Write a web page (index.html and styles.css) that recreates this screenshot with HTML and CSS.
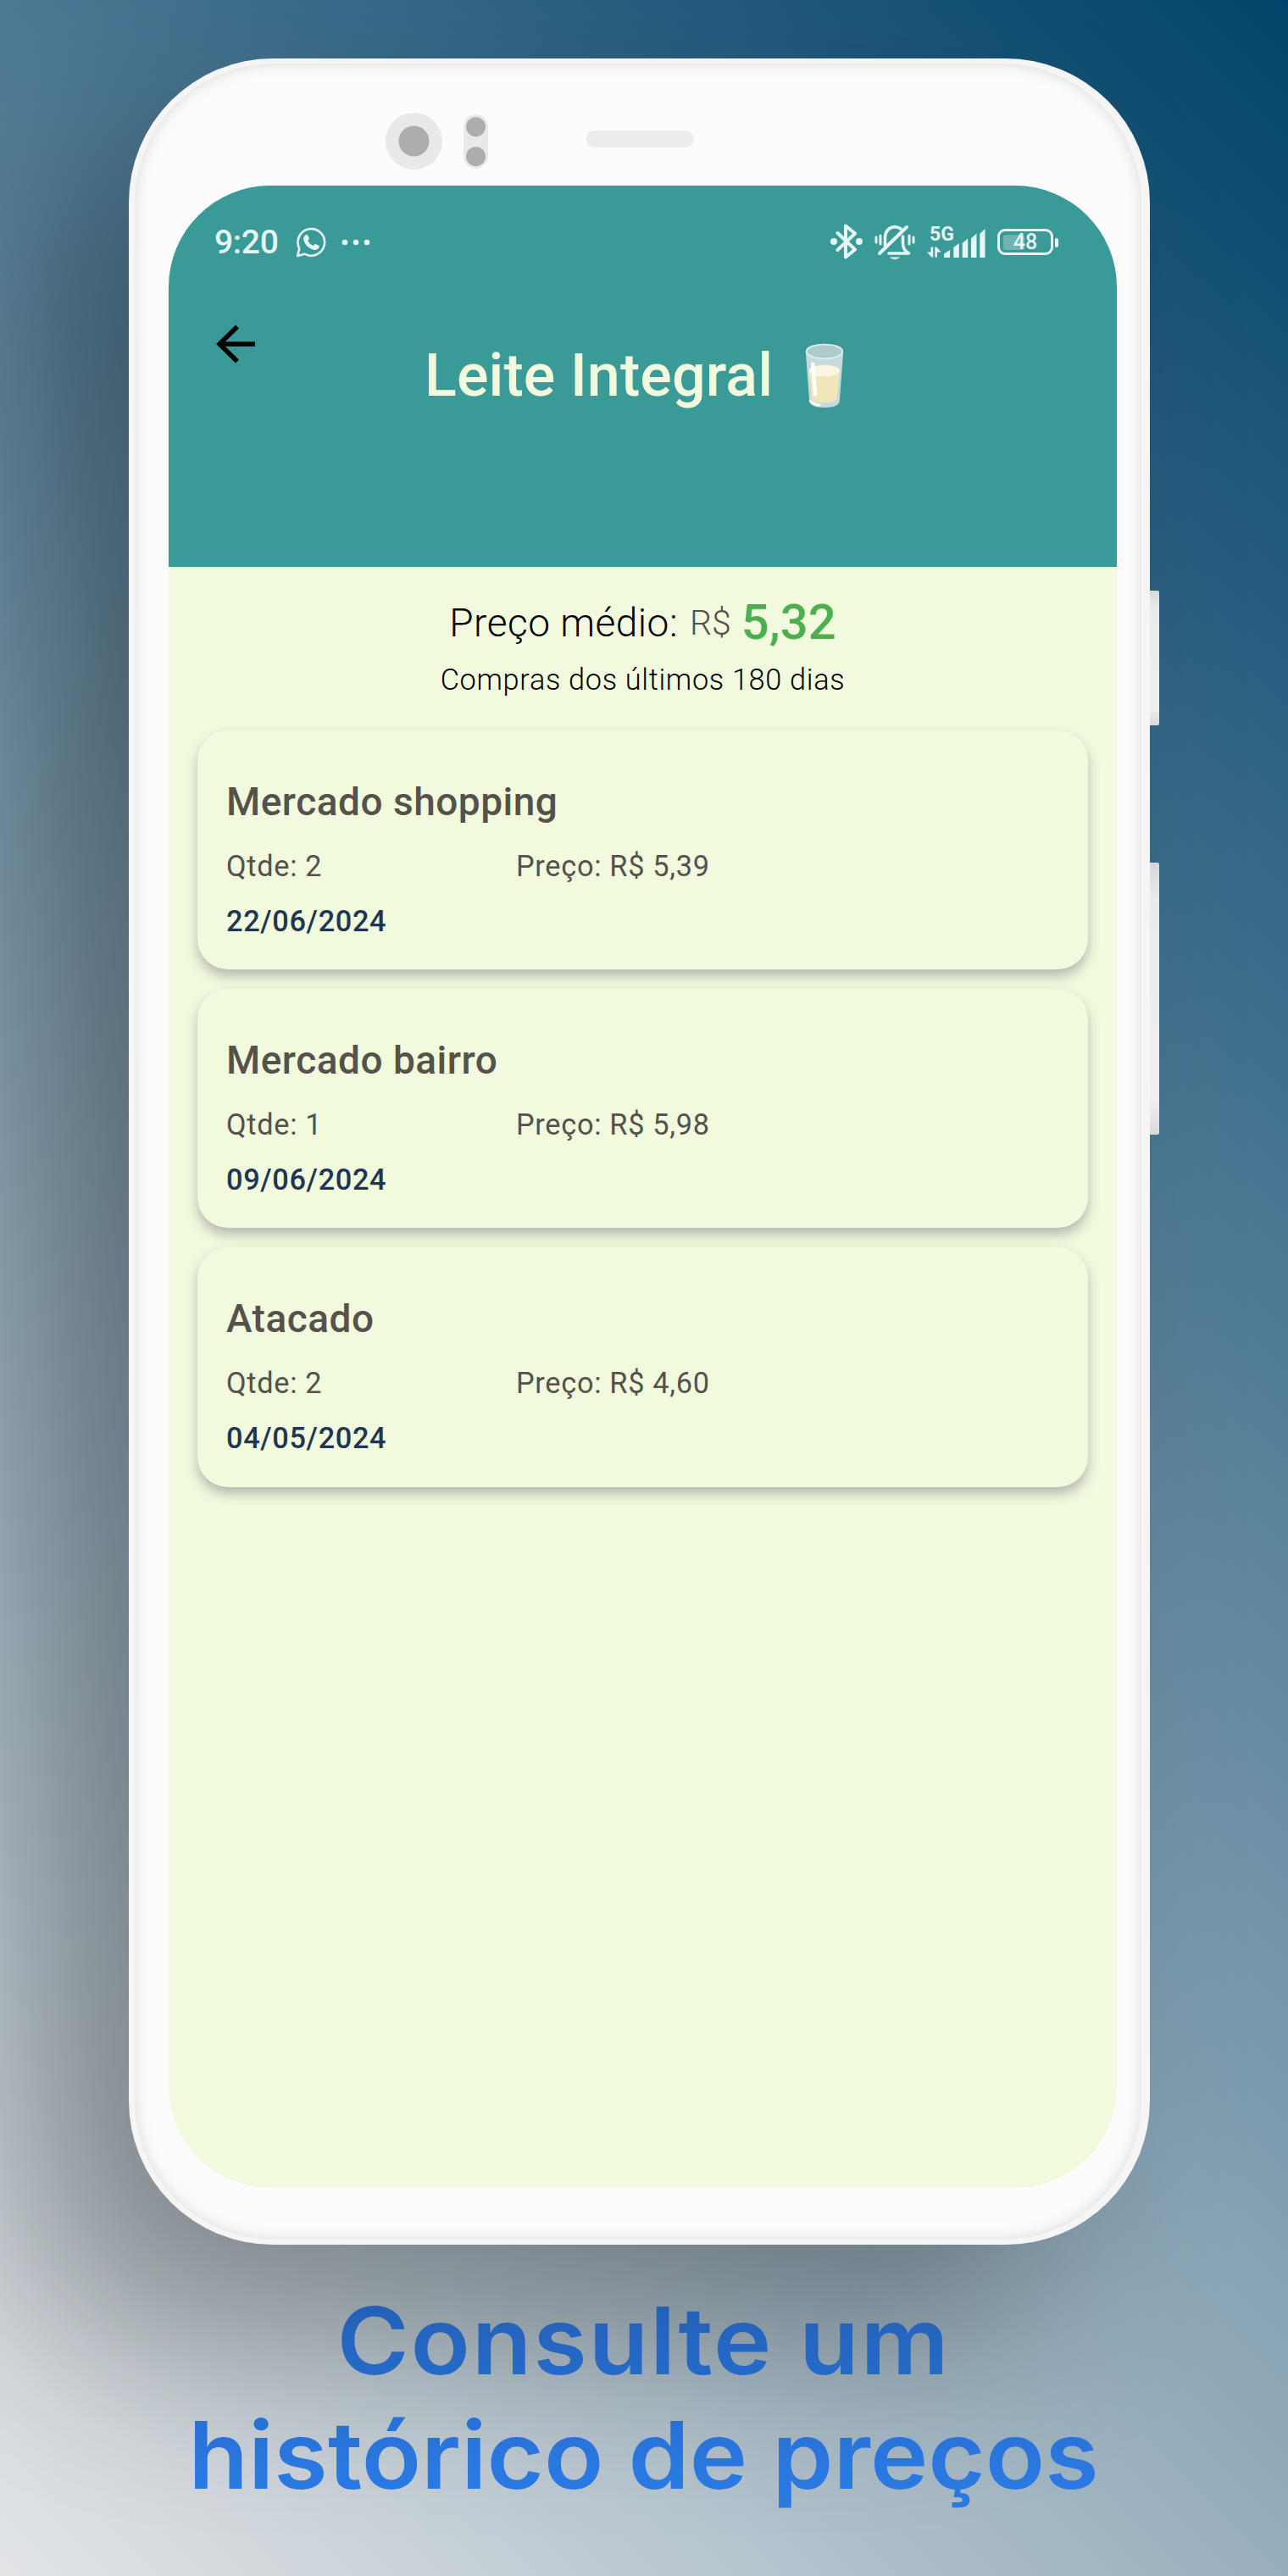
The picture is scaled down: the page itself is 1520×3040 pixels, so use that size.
FILE: index.html
```html
<!DOCTYPE html>
<html lang="pt-BR">
<head>
<meta charset="utf-8">
<title>Leite Integral</title>
<link rel="stylesheet" href="styles.css">
</head>
<body>
<main class="poster">
  <div class="phone">
    <span class="side-button power"></span>
    <span class="side-button volume"></span>
    <div class="bezel">
      <svg class="sensors" viewBox="0 0 1188 144" aria-hidden="true">
        <ellipse cx="329.500" cy="91.500" rx="33.500" ry="33.500" fill="#e9e9e9"/>
        <circle cx="329.500" cy="91.500" r="18" fill="#adadad"/>
        <rect x="388" y="60" width="29" height="64" rx="14.500" fill="#e9e9e9"/>
        <circle cx="402.500" cy="74.700" r="11.500" fill="#adadad"/>
        <circle cx="402.500" cy="109.700" r="11.500" fill="#adadad"/>
        <rect x="532.500" y="79" width="127.500" height="20" rx="10" fill="#ececec"/>
      </svg>
      <div class="screen">
        <header class="app-header">
          <div class="status-bar">
            <span class="clock">9:20</span>
            <svg class="whatsapp" viewBox="0 0 36 36" fill="none" stroke="#e6f6f5">
              <path d="M2 34l2.300-8.700A15.800 15.800 0 1 1 10.500 31.700Z" stroke-width="2.600" stroke-linejoin="round"/>
              <path d="M11.300 9.500c1.400-1.300 2.600-.9 3.100.2l1.400 3.300c.3.900-.2 1.600-1.500 3 1.700 3.100 3.500 4.700 6.500 6 1.500-1.800 2-2.300 3-1.800l3.300 1.600c1 .6.800 1.200.4 2.300-1 2.300-3.700 3.400-6.400 2.600-6-1.700-9.700-5.500-11.500-10.400-.9-2.800-.3-5 1.700-6.800Z" fill="#e6f6f5" stroke="none"/>
            </svg>
            <svg class="dots" viewBox="0 0 34 8" fill="#e6f6f5"><circle cx="4" cy="4" r="3.300"/><circle cx="17" cy="4" r="3.300"/><circle cx="30" cy="4" r="3.300"/></svg>
            <svg class="bluetooth" viewBox="0 0 38 42" fill="none" stroke="#e6f6f5" stroke-width="4" stroke-linejoin="round" stroke-linecap="round">
              <path d="M8.500 11L29 30.500 18 39.500V2.500L29 11.500 8.500 31"/>
              <circle cx="4" cy="21" r="2" fill="#e6f6f5"/><circle cx="34" cy="21" r="2" fill="#e6f6f5"/>
            </svg>
            <svg class="muted" viewBox="0 0 48 42" fill="none" stroke="#e6f6f5" stroke-width="3" stroke-linecap="round" stroke-linejoin="round">
              <path d="M12.500 25V15C13 7 18 2.800 24 2.800c3 0 5 .7 7 2.200M33.500 14v8c0 6 2 8.500 7 12H17" stroke-width="3.600"/>
              <path d="M38 3L6 34" stroke-width="4"/>
              <path d="M2 15v6M7 13v10M41 13v10M46 15v6"/>
              <path d="M18 38.500h12a6.500 4 0 0 1-12 0Z" fill="#e6f6f5" stroke="none"/>
            </svg>
            <div class="network">
              <span class="generation">5G</span>
              <svg viewBox="0 0 70 40" fill="#e6f6f5">
                <path d="M4.500 21.500h2.700V33.500H5.200L0 27.500h4.500ZM9.300 33.500V21.500h2L16.500 27.500H12V33.500Z"/>
                <path d="M20 29.500l7-4.500v9h-7ZM31.300 22l6.500-5v17h-6.500ZM41.700 17l6.500-5.500V34h-6.500ZM52 11.500l6.500-6V34H52ZM62.300 6L68.500 0V34h-6.200Z"/>
              </svg>
            </div>
            <div class="battery"><span class="charge"></span><span class="level">48</span></div>
            <span class="battery-tip"></span>
          </div>
          <svg class="back" viewBox="0 0 46 46" fill="none" stroke="#000" stroke-width="5.500"><path d="M46 23H5M25 2.500L4 23l21 20.500"/></svg>
          <h1 class="title"><span>Leite Integral</span>
            <svg class="glass" viewBox="0 0 46 78">
              <path d="M.5 10Q1 1 23 1T45.500 10L41 70Q39 77 23 77T5 70Z" fill="#c6dadb"/>
              <ellipse cx="23" cy="10" rx="21.500" ry="8.500" fill="#aecbcc" stroke="#e9eeee" stroke-width="1.500"/>
              <path d="M4.500 33H41L38 66Q36 71 23 71T7.500 66Z" fill="#f0e6b8"/>
              <ellipse cx="23" cy="33" rx="18.500" ry="7" fill="#faf6e2"/>
              <path d="M9 25l3 36" stroke="#fff" stroke-width="4.500" stroke-linecap="round"/>
              <path d="M6 69q4 4 11 5" fill="none" stroke="#fff" stroke-width="3" stroke-linecap="round"/>
            </svg>
          </h1>
        </header>
        <section class="summary">
          <p class="average"><span class="label">Preço médio:</span><span class="currency">R$</span><span class="amount">5,32</span></p>
          <p class="period">Compras dos últimos 180 dias</p>
        </section>
        <section class="purchases">
          <article class="card"><h2 class="store">Mercado shopping</h2><p class="detail"><span class="quantity">Qtde: 2</span><span class="price">Preço: R$ 5,39</span></p><p class="date">22/06/2024</p></article>
          <article class="card"><h2 class="store">Mercado bairro</h2><p class="detail"><span class="quantity">Qtde: 1</span><span class="price">Preço: R$ 5,98</span></p><p class="date">09/06/2024</p></article>
          <article class="card"><h2 class="store">Atacado</h2><p class="detail"><span class="quantity">Qtde: 2</span><span class="price">Preço: R$ 4,60</span></p><p class="date">04/05/2024</p></article>
        </section>
      </div>
    </div>
  </div>
  <p class="caption"><span class="line first">Consulte um</span><span class="line second">histórico de preços</span></p>
</main>
</body>
</html>
```
FILE: styles.css
```css
* { box-sizing: border-box; margin: 0; padding: 0; }
body { font-family: Roboto, "Liberation Sans", sans-serif; }
svg { display: block; flex: none; }
.poster {
  width: 1520px; height: 3040px; overflow: hidden;
  padding: 69px 163px 0 152px;
  background: linear-gradient(225deg, #02436b, #e2e4e6);
}
.phone {
  position: relative; width: 1205px; height: 2580px;
  padding: 6px 10px 6px 7px; border-radius: 170px;
  background: #f5f5f5;
  box-shadow: -116px 112px 220px rgba(0, 0, 0, .33);
}
.bezel {
  height: 2568px; border-radius: 164px; background: #fcfcfc;
  box-shadow: inset 0 0 18px rgba(0, 0, 0, .14);
}
.sensors { width: 1188px; height: 144px; }
.side-button {
  position: absolute; left: 1205px; width: 11px; border-radius: 0 2px 2px 0;
  background: linear-gradient(#d8d8d8, #ebebeb 14%, #efefef 88%, #dadada);
}
.power { top: 628px; height: 159px; }
.volume { top: 949px; height: 321px; }
.screen {
  width: 1119px; height: 2363px; margin-left: 40px;
  border-radius: 120px; overflow: hidden; background: #f1fadc;
}
.app-header { height: 449.5px; background: #399a98; padding: 46px 66px 0 54px; }
.status-bar { height: 42px; display: flex; align-items: center; color: #e6f6f5; }
.clock { width: 96px; font-size: 39px; font-weight: 500; line-height: 42px; letter-spacing: -.3px; }
.whatsapp { width: 36px; height: 36px; }
.dots { width: 34px; height: 8px; margin-left: 18px; margin-right: 543px; }
.bluetooth { width: 38px; height: 42px; margin-top: -2px; }
.muted { width: 48px; height: 42px; margin: -1px 0 0 14px; }
.network { position: relative; width: 70px; height: 40px; margin-left: 14px; padding-top: 4px; }
.network svg { width: 70px; height: 40px; }
.generation { position: absolute; left: 3px; top: 0; font-size: 23px; font-weight: 700; line-height: 22px; }
.battery {
  position: relative; flex: none; width: 66px; height: 31px; margin: -1px 0 0 13px;
  border: 3px solid #e6f6f5; border-radius: 9px; padding: 4px;
}
.charge { display: block; width: 25px; height: 18px; border-radius: 3px; background: #6fb4b2; }
.level { position: absolute; inset: 0; text-align: center; font-size: 25px; font-weight: 500; line-height: 26px; }
.battery-tip { width: 4px; height: 11px; margin-left: 2px; border-radius: 2px; background: #e6f6f5; }
.back { width: 46px; height: 46px; margin: 76px 0 0 2px; }
.title {
  display: flex; align-items: flex-start; margin: -27px 0 0 248px;
  font-size: 70px; font-weight: 500; line-height: 82px; color: #f1fadc; white-space: nowrap;
}
.title span { width: 449px; letter-spacing: .1px; }
.glass { width: 46px; height: 77px; margin-top: 3px; }
.summary { height: 193px; padding-top: 27px; text-align: center; }
.average { display: flex; justify-content: center; align-items: baseline; line-height: 76px; height: 76px; }
.label { font-size: 46px; font-weight: 300; color: #000; letter-spacing: .5px; transform: translateY(-3px); }
.currency { font-size: 41px; font-weight: 300; color: #55514b; margin-left: 14px; transform: translateY(-5px); }
.amount { font-size: 58px; font-weight: 500; color: #4caf50; margin-left: 12px; }
.period { font-size: 34.3px; font-weight: 300; line-height: 40px; margin-top: 10px; letter-spacing: .68px; }
.purchases { display: flex; flex-direction: column; gap: 23px; padding: 0 34px; }
.card {
  height: 282.4px; padding: 56px 34px 0; border-radius: 36px; background: #f1fadc;
  box-shadow: 0 8px 14px rgba(90, 80, 110, .38);
}
.store { font-size: 46px; font-weight: 500; line-height: 56px; color: #55514b; letter-spacing: .5px; }
.detail { display: flex; font-size: 34.3px; line-height: 40px; margin-top: 28px; color: #55514b; letter-spacing: .7px; }
.quantity { width: 342px; }
.date { font-size: 34.3px; font-weight: 500; line-height: 40px; margin-top: 25px; color: #203552; letter-spacing: .65px; }
.caption {
  display: flex; flex-direction: column; align-items: center; margin: 46px -160px 0 -150px;
  font-family: Inter, "Open Sans", sans-serif; font-size: 110px; font-weight: 600; line-height: 135px;
  color: transparent; background: linear-gradient(#2361b8 30px, #2a79e3 230px);
  -webkit-background-clip: text; background-clip: text; white-space: nowrap;
  transform: scaleX(1.052);
}
.first { letter-spacing: 1.6px; }
```
